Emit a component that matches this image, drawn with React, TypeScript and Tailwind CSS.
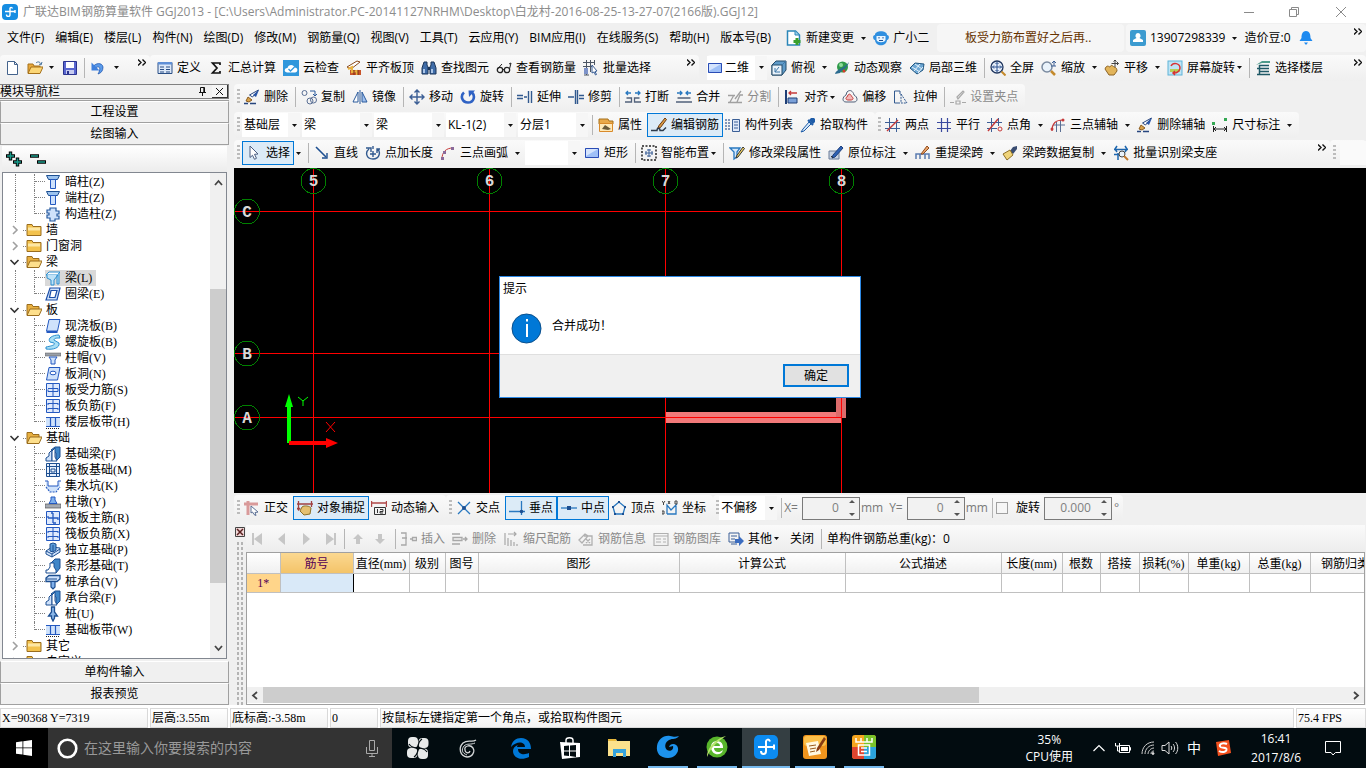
import type { ReactNode } from "react";

const B = "#1d4f91";
const L = "#cfe2fb";

// 16x16 toolbar and tree drawings
const icons: Record<string, ReactNode> = {
  newDoc: <path d="M2.500 1.500h7l3 3v10h-10zM9.500 1.500v3h3" fill="#fff" stroke="#44638c" />,
  open: (
    <>
      <path d="M1 13V4h5l1 2h6v2" fill="#e8a83a" stroke="#a5701a" />
      <path d="M1 13.500 4 7h12l-3 6.500z" fill="#fbd676" stroke="#a5701a" />
      <path d="M9 3c2-2 4-1 5 1m1-2-1 3-2-1" stroke="#44719c" />
    </>
  ),
  save: (
    <>
      <path d="M1.500 1.500h13v13h-13z" fill="#5a67d0" stroke="#2c348f" />
      <path d="M4 2h8v6H4z" fill="#fff" />
      <path d="M4 10h8v4H4z" fill="#c7ccf0" />
      <path d="M5 11h2v3H5z" fill="#2c348f" />
    </>
  ),
  undo: (
    <>
      <path d="M3 7c2-4 9-5 10 0 0 4-2 6-5 7 2-3 3-8-1-7l-2 1.500z" fill="#5b9bea" stroke="#2459b0" strokeWidth=".8" />
      <path d="M1.500 2.500v8h8z" fill="#3f80dd" />
    </>
  ),
  define: (
    <>
      <path d="M1 2.500h14v11H1z" fill="#dce8f8" stroke="#2a4f86" />
      <path d="M1 2h14v2.500H1z" fill="#5f8fd6" />
      <path d="M3 7h4M3 9.500h4M3 12h4M9 7h4M9 9.500h4M9 12h4" stroke="#2a4f86" />
    </>
  ),
  sigma: <path d="M12 5V3H4.500L9 8l-4.500 5H12v-2" stroke="#111" strokeWidth="1.700" />,
  cloud: (
    <>
      <rect width="16" height="16" fill="#2f97dc" />
      <path d="M4 12.500c-4-1-2-5 .5-4.500C5 4 11 4 11.500 7.500c4 0 3.500 5 .5 5z" fill="#fff" />
      <path d="m5.500 9 2 2 4-4" stroke="#2f97dc" strokeWidth="1.300" />
    </>
  ),
  roof: (
    <>
      <path d="M1 7 11 1l3 1-9 7z" fill="#fff" stroke="#8a4a1c" />
      <path d="M4 10h11v5H4z" fill="#c8542a" />
      <path d="m2 9 4-2v5l5-1v4" stroke="#e9b240" strokeWidth="2" />
      <path d="M8 10v5M12 10v5" stroke="#7a2c12" />
    </>
  ),
  binoc: (
    <>
      <path d="M3 2h3v3l1 2v7H1V8zM13 2h-3v3L9 7v7h6V8z" fill="#3f6ca8" stroke="#1b3558" />
      <path d="M3 9v4M11 9v4" stroke="#cfe2fb" strokeWidth="1.500" />
      <path d="M7 7h2v3H7z" fill="#1b3558" />
    </>
  ),
  glasses: (
    <>
      <circle cx="4" cy="10" r="2.700" stroke="#222" strokeWidth="1.300" />
      <circle cx="11" cy="10" r="2.700" stroke="#222" strokeWidth="1.300" />
      <path d="M6.500 9.500h2M13.500 9l1.500-6-2 1M1.500 9 6 4" stroke="#222" />
    </>
  ),
  batch: (
    <>
      <path d="M0 2.500h12M0 6.500h9M3.500 0v15M7.500 0v12M11.500 0v5M1 15h5" stroke="#4b5563" />
      <path d="M1 8h4v6H1z" fill="#7d93c9" />
      <path d="m9 5 5 6-2 .5 1.500 3-1 .5L11 12l-2 1z" fill="#fff" stroke="#3b5f96" />
    </>
  ),
  rect: (
    <>
      <rect x="1" y="3" width="14" height="10" fill="#9fc0f7" />
      <path d="M1.500 3.500h13v9h-13z" stroke="#2a4cb5" />
      <path d="M2 4h12L2 11z" fill="#d5e4fd" />
    </>
  ),
  cube: (
    <>
      <path d="M1 5 5 1h10v9l-4 5H1z" fill="#5f9bc9" stroke="#234a68" />
      <path d="M1 5h10v10H1z" fill="#e9f2fa" stroke="#234a68" />
      <path d="m11 5 4-4M4 8v4h5M8 7l-4 5" stroke="#3f78a8" />
    </>
  ),
  orbit: (
    <>
      <circle cx="8.500" cy="7" r="5.500" fill="#2f9a4a" />
      <circle cx="7" cy="5" r="2" fill="#8fdc9a" />
      <path d="M1 14c1-5 9-5 14-12-2 7-7 7-9 11z" fill="#2b6b8f" />
      <circle cx="10" cy="11" r="1.500" fill="#d93a2b" />
    </>
  ),
  local3d: (
    <>
      <path d="m1 8 5-5 9 1-1 6-6 4z" fill="#6da7d4" stroke="#1f5580" />
      <path d="m3 7 8 5M6 4l7 5M11 4l-6 7M14 7l-5 6" stroke="#e6f2fb" />
    </>
  ),
  full: (
    <>
      <circle cx="7" cy="7" r="6" fill="#e7effa" stroke="#1e355e" strokeWidth="1.300" />
      <path d="M7 2.500v9M2.500 7h9M5.500 4 7 2.500 8.500 4M5.500 10 7 11.500 8.500 10M4 5.500 2.500 7 4 8.500M10 5.500 11.500 7 10 8.500" stroke="#2b5190" />
      <path d="m11.500 11.500 4 4" stroke="#c48a2c" strokeWidth="2" />
    </>
  ),
  zoomIcon: (
    <>
      <circle cx="6" cy="7" r="5" fill="#eaf3fb" stroke="#7b8ba0" strokeWidth="1.500" />
      <path d="m10 11 4 4" stroke="#c48a2c" strokeWidth="2.500" />
      <path d="M13 1v5m-2-3 2-2 2 2m-5 3h5" stroke="#3c5f95" />
    </>
  ),
  pan: (
    <>
      <path d="M2 7c2-2 3 0 4 0 1-3 3-1 4 0 2 0 3 2 3 4l-3 4H5L1 9z" fill="#e2b45a" stroke="#8d6426" />
      <path d="M11 0v7M7.500 3.500h7M9.500 1.500 11 0l1.500 1.500M13 2l1.500 1.500L13 5" stroke="#444" />
    </>
  ),
  screenRot: (
    <>
      <rect x="1" y="1" width="14" height="14" fill="#bfe4f5" stroke="#5fb3d8" />
      <path d="M3 9h10v3H3z" fill="#b8cf57" />
      <path d="M4 6c2-4 9-3 9 2 0 3-3 5-6 5m1-2-2 2 2 2" stroke="#d83333" strokeWidth="1.500" />
    </>
  ),
  floors: (
    <>
      <path d="m1 5 6-4h8v2H7z" fill="#4e9a8a" />
      <path d="M4 5.500h10M2 8.500h12M4 11.500h10M2 14.500h13M4.500 5v10" stroke="#1f5966" strokeWidth="1.500" />
    </>
  ),
  brush: (
    <>
      <path d="m14.500 1-6 7-3-2z" fill="#fff" stroke="#27457e" />
      <path d="m9 6 3 2 3-7z" fill="#2a56a8" />
      <path d="m4 8 4 3-3 2-3-1z" fill="#d8a24b" stroke="#8b5b1e" />
      <path d="M0 14.500h4M6 14.500h6" stroke="#27457e" strokeWidth="1.500" />
    </>
  ),
  copy: (
    <>
      <circle cx="3.500" cy="4" r="2.500" stroke="#5a6f94" />
      <circle cx="9" cy="12" r="3" stroke="#5a6f94" />
      <circle cx="12.500" cy="11" r="3" stroke="#5a6f94" />
      <path d="M9 2h5v4m-2-1 2 2 2-2" stroke="#29589b" />
    </>
  ),
  mirror: (
    <>
      <path d="M6 3v10H1z" fill="#fff" stroke="#2a5a9c" />
      <path d="M10 3v10h5z" fill="#9fc0ee" stroke="#2a5a9c" />
      <path d="M8 1v14" stroke="#2a5a9c" />
    </>
  ),
  move: <path d="M8 1v14M1 8h14M5.500 3.500 8 1l2.500 2.500M5.500 12.500 8 15l2.500-2.500M3.500 5.500 1 8l2.500 2.500M12.500 5.500 15 8l-2.500 2.500" stroke="#3c5f95" strokeWidth="1.400" />,
  rotate: (
    <>
      <path d="M4 3.500C0 7 2 13.500 8 13.500S15.500 7 12 3.500" stroke="#2f62c4" strokeWidth="2.600" />
      <path d="M8.500 1.500H15L9 8z" fill="#2f62c4" />
    </>
  ),
  extend: <path d="M0 6.500h6M0 9.500h6M7 8h3M11.500 2v12M14.500 2v12" stroke="#31598f" strokeWidth="1.400" />,
  trim: <path d="M0 8h6M7.500 1v14M9.500 1v14M11 6.500h5M11 9.500h5" stroke="#31598f" strokeWidth="1.400" />,
  breakI: (
    <>
      <path d="M1 4h5M10 4h5M3 2 1 4l2 2M13 2l2 2-2 2" stroke="#2878c0" strokeWidth="1.300" />
      <path d="M1.500 9h5v4H0M14.500 9h-5v4H16" stroke="#52617b" strokeWidth="1.300" />
    </>
  ),
  merge: (
    <>
      <path d="M1 4h5M15 4h-5M4 2l2 2-2 2M12 2l-2 2 2 2" stroke="#2878c0" strokeWidth="1.300" />
      <path d="M1.500 9h13M0 13h16" stroke="#52617b" strokeWidth="1.300" />
    </>
  ),
  split: <path d="M1 6.500h7M1 13.500h14M3 13l4-7M8 10l6-8M10 13l3-7h3" stroke="#a0a0a0" strokeWidth="1.300" />,
  align: (
    <>
      <path d="M2 1v14" stroke="#1f3f77" strokeWidth="2" />
      <path d="M4 9h9v5H4z" fill="#7aa0d8" stroke="#1f3f77" />
      <path d="M13 4H5m2-2L5 4l2 2" stroke="#c63a3a" strokeWidth="1.300" />
    </>
  ),
  offset: (
    <>
      <path d="M5 3c3-3 6-1 7 3 4 2 4 7 0 7H4c-4 0-4-5 0-7z" stroke="#52617b" />
      <path d="M6 6c2-2 3 0 4 2 2 1 1 3-1 3H6c-2 0-3-2-1-3z" fill="#f2b8b8" stroke="#c63a3a" />
    </>
  ),
  stretch: (
    <>
      <path d="M7 14H1.500V2H7v3" stroke="#31598f" />
      <path d="m8 5 6 9H8z" stroke="#31598f" strokeDasharray="2 1" />
    </>
  ),
  gripPt: <path d="m7 8 6-6 1 1-6 7zM0 13.500h4M6 12h4v3H6zM12 13.500h4" stroke="#a8a8a8" strokeWidth="1.200" />,
  props: (
    <>
      <path d="M1 2h9l1 2h4v3H1z" fill="#e9a94a" stroke="#a5701a" />
      <path d="M1.500 6.500h13v8h-13z" fill="#ffe9b8" stroke="#d98a2a" />
      <path d="m4 12 3-4 6 4-3 1z" fill="#6a5a3a" />
    </>
  ),
  editBar: (
    <>
      <path d="m14 1 1.500 1.500-6 8-3 1 1.500-3z" fill="#d99a45" stroke="#6b3c14" />
      <path d="M0 13.500h6c0-3 3-3 3 0h3l3-3" stroke="#2d3a4a" strokeWidth="1.400" />
    </>
  ),
  list: (
    <>
      <path d="M0 3h5M0 6h5M0 9h5M0 12h5" stroke="#5b75a5" strokeWidth="1.300" strokeDasharray="2 1" />
      <path d="M7.500 2.500h7v12h-7z" fill="#dfe8f8" stroke="#3b5f96" />
      <path d="M9 5h4M9 8h4M9 11h4" stroke="#3b5f96" />
    </>
  ),
  pick: (
    <>
      <path d="M9 3 13 7l2-2V2l-1-1h-3z" fill="#1e5ca8" />
      <path d="m8 3 5 5" stroke="#1e5ca8" strokeWidth="2" />
      <path d="m9 5-6 7-2 3 3-1 7-7z" fill="#d4e6f8" stroke="#1e5ca8" />
    </>
  ),
  twoPts: (
    <>
      <path d="M0 5.500h15M0 11.500h15M4.500 1v14M11.500 1v14" stroke="#3d5e96" />
      <path d="M2 14 13 3" stroke="#c63a3a" strokeWidth="1.400" />
    </>
  ),
  parallel: <path d="M1 5.500h14M1 11.500h14M5.500 1v14M11.500 1v14" stroke="#3a4a9f" strokeWidth="1.200" />,
  ptAngle: (
    <>
      <path d="M0 5.500h15M0 11.500h10M4.500 1v14M11.500 1v8" stroke="#3d5e96" />
      <path d="M1 14 11 2" stroke="#c63a3a" strokeWidth="1.400" />
      <circle cx="13" cy="12" r="2" stroke="#c63a3a" />
    </>
  ),
  threeAxis: (
    <>
      <path d="M3 8h12M10.500 3v12M6.500 5v10" stroke="#5a6f94" />
      <path d="M2 14C2 6 6 3 13 3" stroke="#c63a3a" strokeWidth="1.200" />
      <circle cx="2" cy="12" r="1.500" fill="#c63a3a" />
      <circle cx="13" cy="3" r="1.500" fill="#c63a3a" />
    </>
  ),
  dim: (
    <>
      <path d="M1.500 9v6M14.500 9v6M2 12h12M4 10l-2 2 2 2M12 10l2 2-2 2" stroke="#222" />
      <path d="M0 5h3v3H0zM12 1h3v3h-3z" fill="#34a853" />
    </>
  ),
  cursor: <path d="m4 1 8 8-3.500.3 2 4-2 1-2-4L4 12.500z" fill="#fff" stroke="#4a5d80" />,
  line: (
    <>
      <path d="m2 2 10 10" stroke={B} strokeWidth="1.600" />
      <path d="M8 13h5V8" stroke={B} strokeWidth="1.400" />
    </>
  ),
  ptLen: <path d="M4 4C0 7 1 14 8 14s8-8 4-10M1 3h5v4M8 1v3M8 6v6M5 9h6M12 8V4h3" stroke="#31598f" strokeWidth="1.400" />,
  arc: (
    <>
      <path d="M2 14C2 7 6 3 13 3" stroke="#c63a3a" />
      <path d="M1 12h3v3H1zM3 6h3v3H3zM11 2h3v3h-3z" fill="#8a6a9a" />
    </>
  ),
  smart: (
    <>
      <rect x="1" y="1" width="14" height="14" stroke="#222" strokeWidth="1.500" strokeDasharray="2 1.500" />
      <path d="M8 4v8M4 8h8M6 5h4M6 11h4M5 6v4M11 6v4" stroke="#3b5f96" />
    </>
  ),
  modBeam: (
    <>
      <path d="M1 3h10L8 7v5l-3 2V7z" fill="#d5e8fb" stroke="#2878c0" strokeWidth="1.300" />
      <path d="m14 2 1.500 1.500L9 12l-2 1 .5-2z" fill="#f0d060" stroke="#333" />
    </>
  ),
  inSitu: (
    <>
      <path d="M1 6h10v8H1z" fill="#c9d3e3" stroke="#6b7c98" />
      <path d="m13 1 2 2-8 9-3 1 1-3z" fill="#2f62b5" stroke="#1d3f7c" />
      <path d="m3 11 2 2" stroke="#333" />
    </>
  ),
  respan: (
    <>
      <path d="M1 14V9h13v5M5 9v5M10 9v5" stroke="#5a7bb0" strokeWidth="1.500" />
      <path d="m12 1 2 2-6 6-2 0z" fill="#e9a36a" stroke="#914d1e" />
    </>
  ),
  spanCopy: (
    <>
      <path d="m15 1-4 1-3 4 3 3 4-5z" fill="#3a4d72" />
      <path d="M8 5 1 9l4 6 6-5z" fill="#f0d47a" stroke="#8d6f26" />
    </>
  ),
  identify: (
    <>
      <path d="M1 4.500h14M4 1l-2 3 2 3M12 1l2 3-2 3M5 8v7M11 8v3M1 9.500h6" stroke="#1d66ae" strokeWidth="1.500" />
      <circle cx="9" cy="9" r="3" fill="#e8f2fb" stroke="#444" />
      <path d="m11 11 4 4" stroke="#c0782c" strokeWidth="2" />
    </>
  ),
  ortho: (
    <>
      <path d="M0 4h14M4 1v14" stroke="#d99a9a" strokeWidth="3" />
      <path d="m7 6 7 6-3 .5 1 3-2-1-1.500-2.500L7 13z" fill="#fff" stroke="#5a6f94" />
    </>
  ),
  snap: (
    <>
      <path d="M1.500 1v9M14.500 1v6M0 4h16M0 8l1.500 2L3 8" stroke="#a04040" strokeWidth="1.300" />
      <path d="M5 7c2-2 8-1 9 1l-1 6-6 1-4-4z" fill="#e4c070" stroke="#8d6f26" />
    </>
  ),
  dynIn: (
    <>
      <path d="M.500 1v6M15.500 1v6M1 3h14" stroke="#b04848" strokeWidth="1.400" />
      <path d="M3.500 7.500h11v7h-11zM6.500 9v4M9 9.500h3v2H9v1.500h3" stroke="#333" />
    </>
  ),
  cross: (
    <>
      <path d="m2 2 12 12M14 2 2 14" stroke="#2878c0" strokeWidth="1.300" />
      <circle cx="8" cy="8" r="2" fill={B} />
    </>
  ),
  perp: (
    <>
      <path d="M0 11.500h16M12.500 1v14" stroke="#2878c0" strokeWidth="1.300" />
      <circle cx="12.500" cy="11.500" r="1.800" fill={B} />
    </>
  ),
  mid: (
    <>
      <path d="M0 8h16" stroke="#2878c0" strokeWidth="1.300" />
      <path d="M6 6h4v4H6z" fill={B} />
    </>
  ),
  vertex: (
    <>
      <path d="M8 2 2 7l2 7h8l2-7z" stroke="#2878c0" strokeWidth="1.300" />
      <path d="M7 1h2v2H7zM1 6h2v2H1zM13 6h2v2h-2zM3 13h2v2H3zM11 13h2v2h-2z" fill={B} />
    </>
  ),
  coord: (
    <>
      <path d="M5 14V5l4 5 6-6M5 14h9V6" stroke="#2878c0" strokeWidth="1.300" />
      <path d="m0 1 1.500 2L3 1M1.500 3v2M6 1l2 3M8 1 6 4M13 1h2v3h-2zM0 11h2v3H0z" stroke="#444" />
    </>
  ),
  insert: <path d="M0 2h5v12H0M1 7h5M9 8h3M11.500 6.500h4v3h-4z" stroke="#a8a8a8" strokeWidth="1.300" />,
  remove: <path d="M0 3h8M0 13h8M1 6.500h9v3H1zM11 8h4M13 6l2 2-2 2" stroke="#a8a8a8" strokeWidth="1.300" />,
  scaleBar: <path d="M2 2v12M5 3h8M11 1l2 2-2 2M5 7v8M8 9v6M11 11v4M14 13v2" stroke="#a8a8a8" strokeWidth="1.200" />,
  barInfo: <path d="M1 9l6-6 3 2-6 7zM6 5h8v9H5M8 8l4 4M12 8l-4 4" stroke="#b0b0b0" strokeWidth="1.300" />,
  barLib: <path d="M1 2.500h14v12H1zM1 5h14M3 8h5M3 11h5M10 8h3M10 11h3" stroke="#b0b0b0" strokeWidth="1.200" />,
  other: (
    <>
      <path d="M1 2h10v9H1zM3 5h6M3 8h4M3 13h6" stroke="#3b5f96" />
      <path d="M7 8h4V5l5 5-5 5v-3H7z" fill="#3b6cc0" />
    </>
  ),
  changeDoc: (
    <>
      <path d="M1.500 1h8l4 4v10h-12z" fill="#fff" stroke="#2b86b8" strokeWidth="1.500" />
      <path d="M9 1v4h4" fill="#9ed3ee" stroke="#2b86b8" />
      <path d="M11 8v7M7.500 11.500h7" stroke="#3aa02c" strokeWidth="3" />
    </>
  ),
  mascot: (
    <>
      <path d="M2 5C2 0 14 0 14 5c3 0 2 5 0 5-.5 7-11.500 7-12 0-2 0-3-5 0-5z" fill="#2f8fe0" />
      <path d="M3.500 6h9v4c-1 3-8 3-9 0z" fill="#e8f5ff" />
      <path d="M6 7v1.500M10 7v1.500M6 10.500h4" stroke="#1d4f91" />
    </>
  ),
  user: (
    <>
      <rect width="16" height="16" rx="2" fill="#3c9bd0" />
      <path d="M8 3a2.800 2.800 0 0 1 1.500 5l3.500 2v2H3v-2l3.500-2A2.800 2.800 0 0 1 8 3z" fill="#fff" />
    </>
  ),
  bell: (
    <>
      <path d="M8 1c4 0 4.500 4 4.500 7l2 3h-13l2-3C3.500 5 4 1 8 1z" fill="#1e8af0" />
      <path d="M6 12.500h4L8 15z" fill="#1e8af0" />
    </>
  ),
  // tree
  folder: (
    <>
      <path d="M1 13.500v-11h5l1 2h8v9z" fill="#f3c24d" stroke="#9a6d1e" />
      <path d="M2 5.500h12v3H2z" fill="#fde7a4" />
    </>
  ),
  folderOpen: (
    <>
      <path d="M1 13V2.500h5l1 2h6V7" fill="#e8b041" stroke="#9a6d1e" />
      <path d="M1 13.500 4 7h12l-3 6.500z" fill="#fddf8c" stroke="#9a6d1e" />
    </>
  ),
  column: (
    <>
      <path d="M1.500 1.500h13l-2 4h-9z" fill="#9cc3ee" stroke={B} />
      <path d="M5.500 5.500h5v9h-5z" fill={L} stroke="#2459c0" />
    </>
  ),
  tieCol: <path d="M5 2h6v3h3v3h-2v2h2v3h-4v2H5v-3H2V9h2V7H2V4h3z" fill={L} stroke="#2459a0" strokeWidth="1.200" />,
  beam: (
    <>
      <path d="M1 5 4 2h11l-3 3z" fill="#fff" stroke="#2b8fd0" />
      <path d="M2 5v3l4 2v5h3v-5l4-5M12 5v9h2V3" fill="#bfe2f7" stroke="#2b8fd0" />
    </>
  ),
  ring: <path d="M5 2h10l-3 12H1zM6 4.500h6L10 11.500H4.500z" fill={L} fillRule="evenodd" stroke="#1d4fa8" strokeWidth="1.200" />,
  slab: (
    <>
      <path d="M4 1.500h11L12.500 13H1.500z" fill={L} stroke="#2459c0" />
      <path d="M1.500 13h11v2h-11z" fill="#2459c0" />
    </>
  ),
  spiral: <path d="M14 1C8 1 2 4 5 8l4 1c2 2-3 3-8 4v2c7 1 14-1 13-6L9 6c0-2 3-2 6-2z" fill="#a8dff5" stroke="#2b8fd0" />,
  cap: (
    <>
      <path d="M0 3h16v3H0z" fill="#9aa0a8" stroke="#555" strokeWidth=".5" />
      <path d="M4 7h8l-2 3v4H6v-4z" fill={L} stroke="#2459c0" />
    </>
  ),
  hole: (
    <>
      <path d="M4 1.500h11L12.500 14H1.500z" fill={L} stroke="#2459c0" />
      <ellipse cx="8" cy="7" rx="3" ry="1.800" fill="#fff" stroke="#2459c0" />
    </>
  ),
  bars: (
    <>
      <path d="M1.500 1.500h13v13h-13z" fill="#dfeafd" stroke="#2459c0" />
      <path d="M8 2v12M3 6.500h10v3H3v-2" stroke="#2459c0" />
    </>
  ),
  negBars: (
    <>
      <path d="M1.500 1.500h13v13h-13z" fill="#dfeafd" stroke="#2459c0" />
      <path d="M8 1v14M3 5.500h10M3 10.500h10M3 5v2M13 5v2M3 10v2M13 10v2" stroke="#2459c0" />
    </>
  ),
  strip: (
    <>
      <path d="M1 3h14v10H1z" fill={L} />
      <path d="M1 3.500h14M1 12.500h14M5.500 4v8M10.500 4v8" stroke="#2459c0" strokeWidth="1.200" />
      <path d="M1 14.500h14" stroke="#222" strokeDasharray="1 1" />
    </>
  ),
  fBeam: (
    <>
      <path d="M6 4 10 1h5v10l-4 4V7z" fill="#3f86c8" stroke={B} />
      <path d="M1 15v-3l3-2V7l3-3v11z" fill={L} stroke={B} />
      <path d="M7 15V5l3-3v9l2 4z" fill="#fff" stroke={B} />
    </>
  ),
  raft: (
    <>
      <path d="M1.500 1.500h13v13h-13z" fill="#e8f1fd" stroke={B} />
      <path d="M4.500 2v12M11.500 2v12M2 4.500h12M2 11.500h12M6 7h4v3H6z" stroke={B} />
    </>
  ),
  pit: (
    <>
      <path d="M1 2v7l4 5h6l4-5V2l-3 6H4z" fill={L} />
      <path d="M0 3h3v5h10V3h3" stroke="#2459c0" />
      <path d="M1 9l4 5h6l4-5" stroke="#2459c0" strokeDasharray="2 1" strokeWidth="1.200" />
    </>
  ),
  pier: (
    <>
      <path d="M0 10h16v4H0z" fill="#a5aab2" stroke="#555" strokeWidth=".7" />
      <path d="M6 3h4v3l2 3.500H4L6 6z" fill="#7fb0ec" stroke="#2459c0" />
    </>
  ),
  mainBars: (
    <>
      <path d="M1.500 1.500h13v13h-13z" fill="#dfeafd" stroke="#2459c0" />
      <path d="M8 3v10M3 8h10v2M6 3h2M8 13h3M3 8V6" stroke="#2459c0" strokeWidth="1.300" />
    </>
  ),
  isolated: (
    <>
      <path d="m1 9 6-4 8 1v4l-8 5-6-3z" fill={L} stroke={B} />
      <path d="M5 9V2l3-1 3 1v6L8 10zM8 3v7" fill="#5a9bd8" stroke={B} />
      <path d="m1 9 6 3 8-5M7 12v3" stroke={B} />
    </>
  ),
  stripF: (
    <>
      <path d="m6 5 4-4h5v9l-4 5z" fill="#3f86c8" stroke={B} />
      <path d="M1 15v-3h2l2-3V5h4v4l2 3v3z" fill="#fff" stroke={B} />
    </>
  ),
  pileCap: (
    <>
      <path d="M1 4 4 1.500h11V5l-3 2.500H1z" fill={L} stroke={B} strokeWidth="1.300" />
      <path d="M6 8v5l2 2 2-2V8M1 5h11" fill="#7fb0ec" stroke={B} strokeWidth="1.200" />
    </>
  ),
  pile: <path d="M6.500 1h3v5l3 4h-3v2L8 15l-1.500-3v-2h-3l3-4z" fill="#8ab6e8" stroke={B} strokeWidth="1.300" />,
};

function Icon({ name }: { name: string }) {
  return (
    <svg className="size-4 shrink-0" viewBox="0 0 16 16" fill="none" aria-hidden="true">
      {icons[name]}
    </svg>
  );
}

function Caret() {
  return (
    <svg className="h-[3px] w-[5px] shrink-0" viewBox="0 0 5 3" aria-hidden="true">
      <path d="M0 0h5L2.500 3z" fill="#111" />
    </svg>
  );
}

interface ToolProps {
  icon?: string;
  label: string;
  caret?: boolean;
  tight?: boolean;
  active?: boolean;
  disabled?: boolean;
}

function Tool({ icon, label, caret, tight, active, disabled }: ToolProps) {
  const state = active
    ? "-ml-0.5 mr-0.5 border border-[#0078d7] bg-[#dcebf7] px-[3px]"
    : "pr-[7px]";
  return (
    <button
      type="button"
      disabled={disabled}
      className={`flex h-6 shrink-0 items-center whitespace-nowrap ${state} ${disabled ? "text-[#8a8a8a]" : "text-black"}`}
    >
      {icon && <span className="mr-1 flex"><Icon name={icon} /></span>}
      {label}
      {caret && <span className={tight ? "ml-0.5 flex" : "ml-[7px] flex"}><Caret /></span>}
    </button>
  );
}

function IconButton({ icon, label }: { icon: string; label: string }) {
  return (
    <button type="button" aria-label={label} className="shrink-0">
      <Icon name={icon} />
    </button>
  );
}

function Sep() {
  return <div className="mr-[5px] h-5 w-px shrink-0 bg-[#b5b5b5]" />;
}

function Grip() {
  return <div className="mr-1 h-4 w-[3px] shrink-0 bg-[repeating-linear-gradient(#bcbcbc_0_2px,transparent_2px_4px)]" />;
}

function More() {
  return (
    <button type="button" aria-label="更多" className="ml-auto shrink-0 self-start pr-1 pt-1">
      <svg className="h-[7px] w-2" viewBox="0 0 8 7" fill="none" aria-hidden="true">
        <path d="m0 .5 3 3-3 3M4.500.5l3 3-3 3" stroke="#111" strokeWidth="1.400" />
      </svg>
    </button>
  );
}

function Group({ children, className = "" }: { children: ReactNode; className?: string }) {
  return (
    <div className={`flex h-[26px] items-center rounded bg-linear-to-b from-[#fafafa] to-[#efefef] pl-[3px] ${className}`}>
      {children}
    </div>
  );
}

function Combo({ value, label, className }: { value: string; label: string; className: string }) {
  return (
    <div className={`relative h-6 shrink-0 bg-white ${className}`}>
      <select aria-label={label} className="h-full w-full appearance-none bg-transparent pl-0.5 outline-none">
        <option>{value}</option>
      </select>
      <span className="pointer-events-none absolute inset-y-0 right-0 flex w-3 items-center justify-center bg-[#f6f6f6]">
        <Caret />
      </span>
    </div>
  );
}

function Spin({ id, value, className }: { id: string; value: string; className: string }) {
  return (
    <div className={`flex h-[23px] shrink-0 items-center border border-[#7a7a7a] bg-[#f2f2f2] pr-1 ${className}`}>
      <input id={id} disabled defaultValue={value} className="w-full min-w-0 pr-2.5 text-right text-[#808080]" />
      <svg className="h-4 w-[6px] shrink-0" viewBox="0 0 6 16" aria-hidden="true">
        <path d="M0 3h6L3 0zM0 13h6l-3 3z" fill="#555" />
      </svg>
    </div>
  );
}

const menus = [
  "文件(F)", "编辑(E)", "楼层(L)", "构件(N)", "绘图(D)", "修改(M)", "钢筋量(Q)",
  "视图(V)", "工具(T)", "云应用(Y)", "BIM应用(I)", "在线服务(S)", "帮助(H)", "版本号(B)",
];

function TitleBar() {
  return (
    <header className="flex h-[23px] shrink-0 items-center bg-white pl-0.5 text-[#8c8c8c]">
      <svg className="mr-[5px] size-4" viewBox="0 0 16 16" fill="none" aria-hidden="true">
        <rect width="16" height="16" rx="4" fill="#168de2" />
        <path d="M8 4v6.500c0 2.500-3.500 2.500-3.500 0M3 7.500h10M10.500 4.500C10 3 8 3 8 4.500M13 6v3" stroke="#fff" strokeWidth="1.400" />
      </svg>
      <h1 className="flex-1 truncate">
        广联达BIM钢筋算量软件 GGJ2013 - [C:\Users\Administrator.PC-20141127NRHM\Desktop\白龙村-2016-08-25-13-27-07(2166版).GGJ12]
      </h1>
      <svg className="mr-[19px] h-3 w-[103px]" viewBox="0 0 103 12" fill="none" stroke="#8a8a8a" aria-hidden="true">
        <path d="M0 6.500h10M45.500 3.500h7v7h-7zM47.500 3.500v-2h7v7h-2M92 1l10 10M102 1 92 11" />
      </svg>
    </header>
  );
}

function MenuBar() {
  return (
    <nav className="flex h-[30px] shrink-0 items-center">
      <div className="flex w-[937px] shrink-0 items-center pl-[7px]">
        {menus.map((m) => (
          <button key={m} type="button" className="shrink-0 whitespace-nowrap pr-[11px]">{m}</button>
        ))}
        <div className="ml-1 flex">
          <Tool icon="changeDoc" label="新建变更" caret />
          <Tool icon="mascot" label="广小二" />
        </div>
      </div>
      <div className="mr-0.5 flex h-7 w-[187px] shrink-0 items-center rounded bg-[#f6f6f6] pl-7 text-[#663300]">
        板受力筋布置好之后再..
      </div>
      <div className="flex h-7 flex-1 items-center rounded bg-[#f6f6f6] pl-1">
        <Tool icon="user" label="13907298339" caret />
        <Tool label="造价豆:0" />
        <IconButton icon="bell" label="通知" />
        <More />
      </div>
    </nav>
  );
}

function MainToolbar() {
  return (
    <div className="flex h-[29px] shrink-0 items-center">
      <Group className="w-[150px] shrink-0">
        <div className="flex flex-1 items-center pl-0.5">
          <IconButton icon="newDoc" label="新建" />
          <span className="mx-1.5 flex items-center gap-1.5">
            <IconButton icon="open" label="打开" />
            <Caret />
          </span>
          <span className="ml-0.5 mr-1.5 flex"><IconButton icon="save" label="保存" /></span>
          <Sep />
          <span className="flex items-center gap-2">
            <IconButton icon="undo" label="撤销" />
            <Caret />
          </span>
        </div>
        <More />
      </Group>
      <Group className="mr-2 w-[549px] shrink-0 pl-[7px]">
        <Tool icon="define" label="定义" />
        <Tool icon="sigma" label="汇总计算" />
        <Tool icon="cloud" label="云检查" />
        <Tool icon="roof" label="平齐板顶" />
        <Tool icon="binoc" label="查找图元" />
        <Tool icon="glasses" label="查看钢筋量" />
        <Tool icon="batch" label="批量选择" />
        <More />
      </Group>
      <Group className="min-w-0 flex-1">
        <div className="-ml-[3px] mr-1 flex items-center bg-white">
          <Icon name="rect" />
          <Combo value="二维" label="视图模式" className="w-11" />
        </div>
        <Tool icon="cube" label="俯视" caret />
        <Tool icon="orbit" label="动态观察" />
        <Tool icon="local3d" label="局部三维" />
        <Sep />
        <Tool icon="full" label="全屏" />
        <Tool icon="zoomIcon" label="缩放" caret />
        <Tool icon="pan" label="平移" caret />
        <Tool icon="screenRot" label="屏幕旋转" caret tight />
        <Sep />
        <Tool icon="floors" label="选择楼层" />
        <More />
      </Group>
    </div>
  );
}

function DrawToolbars() {
  return (
    <div className="flex shrink-0 flex-col gap-0.5 pb-0.5">
      <div className="flex">
        <Group>
          <Grip />
          <Tool icon="brush" label="删除" />
          <Sep />
          <Tool icon="copy" label="复制" />
          <Tool icon="mirror" label="镜像" />
          <Sep />
          <Tool icon="move" label="移动" />
          <Tool icon="rotate" label="旋转" />
          <Sep />
          <Tool icon="extend" label="延伸" />
          <Tool icon="trim" label="修剪" />
          <Sep />
          <Tool icon="breakI" label="打断" />
          <Tool icon="merge" label="合并" />
          <Tool icon="split" label="分割" disabled />
          <Sep />
          <Tool icon="align" label="对齐" caret tight />
          <Tool icon="offset" label="偏移" />
          <Tool icon="stretch" label="拉伸" />
          <Sep />
          <Tool icon="gripPt" label="设置夹点" disabled />
        </Group>
      </div>
      <div className="flex">
        <Group>
          <Grip />
          <div className="-ml-0.5 mr-1 flex gap-0.5">
            <Combo value="基础层" label="楼层" className="w-[58px]" />
            <Combo value="梁" label="构件类型" className="w-[70px]" />
            <Combo value="梁" label="构件种类" className="w-[70px]" />
            <Combo value="KL-1(2)" label="构件" className="w-[70px]" />
            <Combo value="分层1" label="分层" className="w-[70px]" />
          </div>
          <Sep />
          <Tool icon="props" label="属性" />
          <Tool icon="editBar" label="编辑钢筋" active />
          <Tool icon="list" label="构件列表" />
          <Tool icon="pick" label="拾取构件" />
        </Group>
        <Group>
          <Grip />
          <Tool icon="twoPts" label="两点" />
          <Tool icon="parallel" label="平行" />
          <Tool icon="ptAngle" label="点角" caret />
          <Tool icon="threeAxis" label="三点辅轴" caret />
          <Tool icon="brush" label="删除辅轴" />
          <Tool icon="dim" label="尺寸标注" caret />
        </Group>
      </div>
      <div className="flex">
        <Group className="w-[1096px]">
          <Grip />
          <Tool icon="cursor" label="选择" active />
          <button type="button" aria-label="选择方式" className="pr-[7px]"><Caret /></button>
          <Sep />
          <Tool icon="line" label="直线" />
          <Tool icon="ptLen" label="点加长度" />
          <Tool icon="arc" label="三点画弧" caret />
          <div className="-ml-0.5 mr-1"><Combo value="" label="参数" className="w-[55px]" /></div>
          <Tool icon="rect" label="矩形" />
          <Sep />
          <Tool icon="smart" label="智能布置" caret tight />
          <Sep />
          <Tool icon="modBeam" label="修改梁段属性" />
          <Tool icon="inSitu" label="原位标注" caret />
          <Tool icon="respan" label="重提梁跨" caret />
          <Tool icon="spanCopy" label="梁跨数据复制" caret />
          <Tool icon="identify" label="批量识别梁支座" />
          <More />
        </Group>
        <Group className="flex-1">
          <Grip />
          <div className="h-6 flex-1 bg-[#fafafa]" />
        </Group>
      </div>
    </div>
  );
}

interface TreeItem {
  label: string;
  icon: string;
  last?: boolean;
  selected?: boolean;
  // group rows only
  group?: boolean;
  open?: boolean;
}

const tree: TreeItem[] = [
  { label: "暗柱(Z)", icon: "column" },
  { label: "端柱(Z)", icon: "column" },
  { label: "构造柱(Z)", icon: "tieCol", last: true },
  { label: "墙", icon: "folder", group: true },
  { label: "门窗洞", icon: "folder", group: true },
  { label: "梁", icon: "folderOpen", group: true, open: true },
  { label: "梁(L)", icon: "beam", selected: true },
  { label: "圈梁(E)", icon: "ring", last: true },
  { label: "板", icon: "folderOpen", group: true, open: true },
  { label: "现浇板(B)", icon: "slab" },
  { label: "螺旋板(B)", icon: "spiral" },
  { label: "柱帽(V)", icon: "cap" },
  { label: "板洞(N)", icon: "hole" },
  { label: "板受力筋(S)", icon: "bars" },
  { label: "板负筋(F)", icon: "negBars" },
  { label: "楼层板带(H)", icon: "strip", last: true },
  { label: "基础", icon: "folderOpen", group: true, open: true },
  { label: "基础梁(F)", icon: "fBeam" },
  { label: "筏板基础(M)", icon: "raft" },
  { label: "集水坑(K)", icon: "pit" },
  { label: "柱墩(Y)", icon: "pier" },
  { label: "筏板主筋(R)", icon: "mainBars" },
  { label: "筏板负筋(X)", icon: "negBars" },
  { label: "独立基础(P)", icon: "isolated" },
  { label: "条形基础(T)", icon: "stripF" },
  { label: "桩承台(V)", icon: "pileCap" },
  { label: "承台梁(F)", icon: "fBeam" },
  { label: "桩(U)", icon: "pile" },
  { label: "基础板带(W)", icon: "strip", last: true },
  { label: "其它", icon: "folder", group: true },
  { label: "自定义", icon: "folder", group: true },
];

function TreeRow({ item }: { item: TreeItem }) {
  if (item.group) {
    return (
      <li className="flex h-4 items-center pl-1.5">
        <svg className="mr-0.5 size-3 shrink-0" viewBox="0 0 12 12" fill="none" aria-hidden="true">
          <path
            d={item.open ? "m1.500 4 4 4 4-4" : "m4 2 4 4-4 4"}
            stroke={item.open ? "#333" : "#a0a0a0"}
            strokeWidth="1.600"
          />
        </svg>
        <span className="w-[3px] border-t border-dotted border-[#808080]" />
        <Icon name={item.icon} />
        <span className="ml-1">{item.label}</span>
      </li>
    );
  }
  return (
    <li className="flex h-4 pl-3">
      <span className="w-[19px] border-l border-dotted border-[#808080]" />
      <span className={`w-0 border-l border-dotted border-[#808080] ${item.last ? "h-2" : "h-4"}`} />
      <span className="h-2 w-[10px] border-b border-dotted border-[#808080]" />
      <span className={`flex items-center pr-1 ${item.selected ? "bg-[#d9d9d9]" : ""}`}>
        <Icon name={item.icon} />
        <span className="ml-1">{item.label}</span>
      </span>
    </li>
  );
}

function NavButton({ label }: { label: string }) {
  return (
    <button type="button" className="h-[22px] w-full shrink-0 border border-[#a0a0a0] border-t-white bg-[#f0f0f0]">
      {label}
    </button>
  );
}

function NavPanel() {
  return (
    <aside className="flex w-[229px] shrink-0 flex-col pt-0.5 font-['Liberation_Serif','Noto_Sans_CJK_SC',sans-serif]">
      <div className="flex h-[15px] shrink-0 items-center border-y border-r border-[#808080]">
        <h2 className="flex-1">模块导航栏</h2>
        <svg className="mr-1.5 h-[9px] w-[7px]" viewBox="0 0 7 9" fill="none" aria-hidden="true">
          <path d="M1.500.5h4v5h-4zM0 5.500h7M3.500 5.500V9M4.800.5v5" stroke="#111" />
        </svg>
        <button type="button" aria-label="关闭面板" className="flex h-[13px] w-4 items-center justify-center border-b border-r border-[#333] bg-[#f5f5f5]">
          <svg className="size-[9px]" viewBox="0 0 9 9" aria-hidden="true">
            <path d="m1 1 7 7M8 1 1 8" stroke="#111" />
          </svg>
        </button>
      </div>
      <div className="mt-px flex flex-col border-t border-[#a0a0a0]">
        <NavButton label="工程设置" />
        <NavButton label="绘图输入" />
      </div>
      <div className="mx-0.5 mt-px flex h-[26px] shrink-0 items-center gap-2 bg-linear-to-b from-white to-[#ececec] pl-1">
        <button type="button" aria-label="全部展开">
          <svg className="size-4" viewBox="0 0 16 16" aria-hidden="true">
            <path d="M0 5h9M4.500.5v9M7 11h9M11.500 6.500v9" stroke="#000" strokeWidth="3.400" />
            <path d="M1 5h7M4.500 1.500v7M8 11h7M11.500 7.500v7" stroke="#1b9c8c" strokeWidth="1.600" />
          </svg>
        </button>
        <button type="button" aria-label="全部折叠">
          <svg className="size-4" viewBox="0 0 16 16" aria-hidden="true">
            <path d="M0 5h9M7 11h9" stroke="#000" strokeWidth="3.400" />
            <path d="M1 5h7M8 11h7" stroke="#1b9c8c" strokeWidth="1.600" />
          </svg>
        </button>
      </div>
      <div className="mx-0.5 mb-0.5 flex min-h-0 flex-1 border border-[#828790] bg-white">
        <ul className="min-w-0 flex-1 overflow-hidden pt-px">
          {tree.map((item) => <TreeRow key={item.label} item={item} />)}
        </ul>
        <div className="flex w-4 shrink-0 flex-col items-center bg-[#f0f0f0]">
          <svg className="mt-1.5 h-2 w-[9px]" viewBox="0 0 9 8" fill="none" aria-hidden="true">
            <path d="m1 6 3.500-4L8 6" stroke="#444" strokeWidth="1.800" />
          </svg>
          <div className="flex-100" />
          <div className="w-full flex-290 bg-[#cdcdcd]" />
          <div className="flex-60" />
          <svg className="mb-1.5 h-2 w-[9px]" viewBox="0 0 9 8" fill="none" aria-hidden="true">
            <path d="m1 2 3.500 4L8 2" stroke="#444" strokeWidth="1.800" />
          </svg>
        </div>
      </div>
      <NavButton label="单构件输入" />
      <NavButton label="报表预览" />
    </aside>
  );
}

const axesX = [
  { name: "5", at: 79 },
  { name: "6", at: 255 },
  { name: "7", at: 431 },
  { name: "8", at: 607 },
];
const axesY = [
  { name: "C", at: 43 },
  { name: "B", at: 185 },
  { name: "A", at: 249 },
];

function AxisMark({ x, y, name }: { x: number; y: number; name: string }) {
  return (
    <>
      <circle cx={x} cy={y} r="12.500" fill="none" stroke="#008000" shapeRendering="crispEdges" />
      <text x={x} y={y + 5} textAnchor="middle" fill="#d8d8d8" className="font-['Liberation_Mono',monospace] text-base font-bold">
        {name}
      </text>
    </>
  );
}

function Canvas() {
  return (
    <div className="relative min-h-0 flex-1 overflow-hidden bg-black">
      <svg className="absolute inset-0 h-full w-full" aria-label="轴网">
        <rect x="432" y="244" width="176" height="11" fill="#f27a7a" />
        <rect x="602" y="190" width="10" height="60" fill="#dd6c6c" />
        {axesX.map((a) => (
          <line key={a.name} x1={a.at + 0.5} x2={a.at + 0.5} y1="0" y2="100%" stroke="#f00" />
        ))}
        {axesY.map((a) => (
          <line key={a.name} x1="0" x2="608" y1={a.at + 0.5} y2={a.at + 0.5} stroke="#f00" />
        ))}
        {axesX.map((a) => <AxisMark key={a.name} x={a.at + 0.5} y={13} name={a.name} />)}
        {axesY.map((a) => <AxisMark key={a.name} x={13} y={a.at + 0.5} name={a.name} />)}
        <path d="M53 275v-36h-2l4-13 4 13h-2v36z" fill="#0f0" />
        <path d="M55 273h37v-3l12 5-12 5v-3H55z" fill="#f00" />
        <path d="m64 229 5 4v5M74 229l-5 4" stroke="#0f0" fill="none" />
        <path d="m92 254 9 10M101 254l-9 10" stroke="#f00" />
      </svg>
      <div
        role="dialog"
        aria-label="提示"
        className="absolute left-[265px] top-[108px] flex w-[362px] flex-col border border-[#2d89e5] bg-white"
      >
        <p className="pl-[3px] pt-1 leading-4">提示</p>
        <div className="flex h-[57px] items-start gap-2.5 pl-[11px] pt-4">
          <svg className="size-[31px]" viewBox="0 0 31 31" aria-hidden="true">
            <circle cx="15.500" cy="15.500" r="14.500" fill="#0078d7" stroke="#0a4f8c" />
            <path d="M15 6h2v2.500h-2zM15 11h2v13h-2z" fill="#fff" />
          </svg>
          <p className="pt-[5px]">合并成功！</p>
        </div>
        <div className="flex h-[43px] items-center justify-end border-t border-[#dfdfdf] bg-[#f0f0f0] pb-px pr-[11px]">
          <button type="button" className="h-[23px] w-[66px] border-2 border-[#0078d7] bg-[#e1e1e1]">确定</button>
        </div>
      </div>
    </div>
  );
}

function SnapBar() {
  return (
    <div className="flex h-8 shrink-0 items-start pt-0.5">
      <Group>
        <Grip />
        <Tool icon="ortho" label="正交" />
        <Tool icon="snap" label="对象捕捉" active />
        <Tool icon="dynIn" label="动态输入" />
      </Group>
      <Group>
        <Grip />
        <Tool icon="cross" label="交点" />
        <Tool icon="perp" label="垂点" active />
        <Tool icon="mid" label="中点" active />
        <Tool icon="vertex" label="顶点" />
        <Tool icon="coord" label="坐标" />
      </Group>
      <Group className="pr-1 text-[#7a7a7a]">
        <Grip />
        <div className="-ml-1 mr-1 text-black"><Combo value="不偏移" label="偏移方式" className="w-[58px]" /></div>
        <div className="mr-0.5 h-5 w-px bg-[#b5b5b5]" />
        <label htmlFor="dx" className="mr-1">X=</label>
        <Spin id="dx" value="0" className="w-[58px]" />
        <span className="ml-px mr-1.5">mm</span>
        <label htmlFor="dy" className="mr-1">Y=</label>
        <Spin id="dy" value="0" className="w-[58px]" />
        <span className="ml-px mr-1">mm</span>
        <div className="mr-[3px] h-5 w-px bg-[#b5b5b5]" />
        <input id="rot" type="checkbox" className="size-3 appearance-none border border-[#a0a0a0] bg-[#f6f6f6]" />
        <label htmlFor="rot" className="ml-2 mr-1 text-black">旋转</label>
        <Spin id="angle" value="0.000" className="w-[68px]" />
        <label htmlFor="angle" className="ml-0.5">°</label>
      </Group>
    </div>
  );
}

const navIcons = [
  { label: "首条", d: "M2 2h2v12H2zM12 2v12L4 8z" },
  { label: "上一条", d: "M11 2v12L4 8z" },
  { label: "下一条", d: "M5 2v12l7-6z" },
  { label: "末条", d: "M12 2h2v12h-2zM4 2v12l8-6z" },
];
const moveIcons = [
  { label: "上移", d: "m8 3 5 5h-3v5H6V8H3z" },
  { label: "下移", d: "m8 13 5-5h-3V3H6v5H3z" },
];

function NavIcon({ label, d }: { label: string; d: string }) {
  return (
    <button type="button" disabled aria-label={label}>
      <svg className="size-4" viewBox="0 0 16 16" aria-hidden="true">
        <path d={d} fill="#c6c6c6" />
      </svg>
    </button>
  );
}

const columns = [
  { label: "", w: 33 },
  { label: "筋号", w: 73 },
  { label: "直径(mm)", w: 56 },
  { label: "级别", w: 36 },
  { label: "图号", w: 33 },
  { label: "图形", w: 201 },
  { label: "计算公式", w: 166 },
  { label: "公式描述", w: 156 },
  { label: "长度(mm)", w: 61 },
  { label: "根数", w: 38 },
  { label: "搭接", w: 39 },
  { label: "损耗(%)", w: 49 },
  { label: "单重(kg)", w: 61 },
  { label: "总重(kg)", w: 61 },
  { label: "钢筋归类", w: 70 },
];

function RebarTable() {
  return (
    <table className="w-[1133px] table-fixed border-collapse">
      <colgroup>
        {columns.map((c, i) => <col key={i} style={{ width: c.w }} />)}
      </colgroup>
      <thead>
        <tr className="h-5">
          {columns.map((c, i) => (
            <th
              key={i}
              scope="col"
              className={`whitespace-nowrap border-b border-r border-[#c0c0c0] p-0 pt-0.5 font-normal ${
                i === 1 ? "bg-linear-to-b from-[#fbd890] to-[#f3c368] text-[#550055]" : "bg-linear-to-b from-white to-[#f0f0f0]"
              }`}
            >
              {c.label}
            </th>
          ))}
        </tr>
      </thead>
      <tbody>
        <tr className="h-[19px]">
          {columns.map((c, i) => (
            <td
              key={i}
              className={`border-b border-r border-[#c0c0c0] p-0 text-center ${
                i === 0 ? "bg-[#ffd58a] text-[#550055]" : i === 1 ? "border-r-black bg-[#d9e9f8]" : ""
              }`}
            >
              {i === 0 ? "1*" : ""}
            </td>
          ))}
        </tr>
      </tbody>
    </table>
  );
}

function RebarPanel() {
  return (
    <section className="flex h-[180px] shrink-0 pr-px">
      <div className="flex w-3 shrink-0 flex-col items-center pt-0.5">
        <svg className="size-[10px] shrink-0" viewBox="0 0 10 10" fill="none" aria-hidden="true">
          <path d="M.5.500h9v9h-9z" fill="#f0d8d8" stroke="#444" />
          <path d="m2 2 6 6M8 2 2 8" stroke="#5a2020" strokeWidth="1.500" />
        </svg>
        <div className="mt-1 w-2 flex-1 bg-[radial-gradient(#b4b4b4_1px,transparent_1px)] bg-[size:4px_5px]" />
      </div>
      <div className="flex min-w-0 flex-1 flex-col">
        <div className="flex h-[27px] shrink-0 items-center bg-linear-to-b from-[#fafafa] to-[#ededed] pl-1">
          <div className="mr-1.5 flex gap-2">
            {navIcons.map((n) => <NavIcon key={n.label} {...n} />)}
          </div>
          <Sep />
          <div className="mr-[7px] flex gap-1.5">
            {moveIcons.map((n) => <NavIcon key={n.label} {...n} />)}
          </div>
          <Sep />
          <Tool icon="insert" label="插入" disabled />
          <Tool icon="remove" label="删除" disabled />
          <Tool icon="scaleBar" label="缩尺配筋" disabled />
          <Tool icon="barInfo" label="钢筋信息" disabled />
          <Tool icon="barLib" label="钢筋图库" disabled />
          <Tool icon="other" label="其他" caret tight />
          <div className="ml-1"><Tool label="关闭" /></div>
          <Sep />
          <span>单构件钢筋总重(kg)：0</span>
        </div>
        <div className="flex min-h-0 flex-1 flex-col border border-[#a0a0a0] bg-white font-['Liberation_Serif','Noto_Sans_CJK_SC',sans-serif]">
          <div className="min-h-0 flex-1 overflow-hidden">
            <RebarTable />
          </div>
          <div className="mb-px flex h-4 shrink-0 items-center bg-[#f0f0f0]">
            <svg className="mx-1 h-[9px] w-2" viewBox="0 0 8 9" fill="none" aria-hidden="true">
              <path d="M6 1 2 4.500 6 8" stroke="#444" strokeWidth="1.800" />
            </svg>
            <div className="h-full flex-66 bg-[#cdcdcd]" />
            <div className="flex-34" />
            <svg className="mx-1 h-[9px] w-2" viewBox="0 0 8 9" fill="none" aria-hidden="true">
              <path d="m2 1 4 3.500L2 8" stroke="#444" strokeWidth="1.800" />
            </svg>
          </div>
        </div>
      </div>
    </section>
  );
}

const statusCell = "flex items-center whitespace-nowrap border border-[#d9d9d9] bg-linear-to-b from-white to-[#f2f2f2] pl-px";

function StatusBar() {
  return (
    <footer className="flex h-[23px] shrink-0 gap-0.5 bg-white pt-[3px] font-['Liberation_Serif','Noto_Sans_CJK_SC',sans-serif]">
      <div className={`${statusCell} w-[148px]`}>X=90368 Y=7319</div>
      <div className={`${statusCell} w-[78px]`}>层高:3.55m</div>
      <div className={`${statusCell} w-[98px]`}>底标高:-3.58m</div>
      <div className={`${statusCell} w-12`}>0</div>
      <div className={`${statusCell} flex-1`}>按鼠标左键指定第一个角点，或拾取构件图元</div>
      <div className={`${statusCell} w-[70px]`}>75.4 FPS</div>
    </footer>
  );
}

interface AppEntry {
  label: string;
  running?: boolean;
  active?: boolean;
  art: ReactNode;
}

// 24x24 taskbar drawings
const tools: AppEntry[] = [
  {
    label: "风扇",
    art: (
      <>
        <g fill="#e8eaea">
          <rect x="2" y="1" width="10" height="10.500" rx="4" />
          <rect x="12.500" y="2" width="10" height="10" rx="4" />
          <rect x="1" y="12" width="10.500" height="10" rx="4" />
          <rect x="12" y="12.500" width="10" height="10.500" rx="4" />
        </g>
        <path d="M12 12C8 12 5 11 3 8M12 12c0-4 1-7 4-9M12 12c4 0 7 1 9 4M12 12c0 4-1 7-4 9" stroke="#020c10" strokeWidth="1.200" />
      </>
    ),
  },
  {
    label: "浏览器",
    art: (
      <>
        <path d="M21 4c-4 3-8-1-13 3-5 5-3 13 4 14 6 0 8-6 6-9-3-4-9-2-8 2 0 3 4 4 5 1" stroke="#d5d8d9" strokeWidth="1.300" />
        <path d="M20 7c-4 2-8 0-11 3-3 4-2 7 3 9" stroke="#d5d8d9" />
      </>
    ),
  },
];

const apps: AppEntry[] = [
  {
    label: "Edge",
    art: <path d="M2 11C3 5 7 2 12 2c7 0 10 5 10 11H9c0 6 7 6 11 4v4C12 25 4 22 4 15c0-3 2-5 5-6-1 1-1 2-1 2h8c0-6-9-6-14 0z" fill="#0078d7" />,
  },
  {
    label: "应用商店",
    art: (
      <>
        <path d="M8 7V4c0-3 7-3 7 0v3" stroke="#fff" strokeWidth="1.400" />
        <path d="m2 6 20 1v14l-18 2z" fill="#fff" />
        <path d="m6 10 5-.5v5H6zM12 9.500l6-.5v5.500h-6zM6 15.500h5v4.500l-5-.5zM12 15.500h6V21l-6-1z" fill="#020c10" />
      </>
    ),
  },
  {
    label: "文件资源管理器",
    art: (
      <>
        <path d="M1 3h8l1 2h13v15H1z" fill="#fbe18c" />
        <path d="M1 3h8v2H1z" fill="#e8b93c" />
        <path d="M6 21v-8h13v8h-3v-4H9v4z" fill="#36a3dc" />
      </>
    ),
  },
  {
    label: "G+",
    running: true,
    art: <path d="M23 1c-3 4-6 2-10 4-4 2-5 7-2 10 3 2 7 0 6-4l-4 1c1-4 8-4 9 1 1 5-4 10-10 10C4 23 0 18 1 11 2 5 7 0 14 1c4 1 6 1 9 0z" fill="#1d93ee" />,
  },
  {
    label: "360浏览器",
    running: true,
    art: (
      <>
        <circle cx="12" cy="12" r="10.500" fill="#58b52c" />
        <path d="M6 12c0-8 12-8 12 0v1H9c0 5 6 5 9 2-2 7-12 5-12-3zM9 11h6c0-4-6-4-6 0z" fill="#fff" />
        <path d="M2 22C2 12 12 3 21 1 13 6 6 12 2 22z" fill="#b5e46a" />
      </>
    ),
  },
  {
    label: "广联达",
    running: true,
    active: true,
    art: (
      <>
        <rect width="24" height="24" rx="5" fill="#0c8bf0" />
        <path d="M12 6v10c0 4-5 4-5 0M4 12h16M16 6.500c-1-3-4-2-4 0M20 9.500v5" stroke="#fff" strokeWidth="2" />
      </>
    ),
  },
  {
    label: "写字板",
    running: true,
    art: (
      <>
        <rect width="24" height="24" rx="3" fill="#f0951d" />
        <rect x="1" y="1" width="22" height="10" rx="3" fill="#fbc04a" />
        <path d="m3 8 12-2 3 13-12 2z" fill="#fff8e0" />
        <path d="m6 11 7-1M7 14l6-1M7 17l5-1" stroke="#9a5a1c" />
        <path d="m21 2-7 11-1 4 3-2 7-11z" fill="#8a3c12" />
      </>
    ),
  },
  {
    label: "算量",
    running: true,
    art: (
      <>
        <rect width="24" height="24" rx="3" fill="#f5a51f" />
        <path d="M12 0h9q3 0 3 3v9H12z" fill="#7ac32a" />
        <path d="M12 12h12v9q0 3-3 3h-9z" fill="#2ba4dd" />
        <path d="M0 12h12v12H3q-3 0-3-3z" fill="#e0452f" />
        <path d="M4 3v4h16V3M9 3v4M15 3v4M6.500 10v10h11V10zM9 13h6M9 16.500h6" stroke="#fff" strokeWidth="1.500" />
      </>
    ),
  },
];

function AppButton({ app }: { app: AppEntry }) {
  return (
    <button
      type="button"
      aria-label={app.label}
      className={`flex h-full w-12 flex-col items-center ${app.active ? "bg-[#343e42]" : ""}`}
    >
      <span className="flex flex-1 items-center">
        <svg className="size-6" viewBox="0 0 24 24" fill="none" aria-hidden="true">{app.art}</svg>
      </span>
      {app.running && <span className={`h-0.5 bg-[#76b9ed] ${app.active ? "w-12" : "w-10"}`} />}
    </button>
  );
}

function TaskBar() {
  return (
    <div className="flex h-10 shrink-0 items-center bg-[#020c10] text-white">
      <button type="button" aria-label="开始" className="flex h-full w-12 shrink-0 items-center justify-center bg-black">
        <svg className="size-4" viewBox="0 0 16 16" fill="#fff" aria-hidden="true">
          <path d="M0 2.200 6.500 1.300v6.200H0zM7.300 1.200 16 0v7.500H7.300zM0 8.300h6.500v6.300L0 13.700zM7.300 8.300H16V16l-8.700-1.200z" />
        </svg>
      </button>
      <div className="mr-0.5 flex h-full w-[344px] shrink-0 items-center bg-[#333] pl-[9px] pr-3.5">
        <svg className="mr-1.5 size-[21px] shrink-0" viewBox="0 0 21 21" fill="none" aria-hidden="true">
          <circle cx="10.500" cy="10.500" r="8.800" stroke="#fff" strokeWidth="2.600" />
        </svg>
        <input
          aria-label="搜索"
          placeholder="在这里输入你要搜索的内容"
          className="min-w-0 flex-1 text-sm placeholder:text-[#999]"
        />
        <svg className="h-[17px] w-3" viewBox="0 0 12 17" fill="none" stroke="#aaa" aria-hidden="true">
          <path d="M3.500.5h5v10h-5zM.5 7v6.500h11V7M6 13.500V16M3 16.500h6" />
        </svg>
      </div>
      <div className="flex h-full flex-1 gap-1.5">
        <div className="flex gap-px">
          {tools.map((a) => <AppButton key={a.label} app={a} />)}
        </div>
        <div className="flex gap-px">
          {apps.map((a) => <AppButton key={a.label} app={a} />)}
        </div>
      </div>
      <p className="mr-5 text-center leading-[17px]">35%<br />CPU使用</p>
      <div className="flex shrink-0 items-center">
        <svg className="mr-2.5 h-2 w-3" viewBox="0 0 12 8" fill="none" aria-hidden="true">
          <path d="m.5 7 5.500-5.500L11.500 7" stroke="#fff" strokeWidth="1.200" />
        </svg>
        <svg className="mr-2.5 h-[13px] w-4" viewBox="0 0 16 13" fill="none" aria-hidden="true">
          <path d="M4.500 3.500h10v7h-10zM14.500 5.500h1v3M.5 1v3h4V1M2.500 4v5h2" stroke="#fff" />
          <path d="M6 5h7v4H6z" fill="#fff" />
        </svg>
        <svg className="mr-1.5 size-[14px]" viewBox="0 0 14 14" fill="none" stroke="#ccc" aria-hidden="true">
          <path d="M1 13C1 6 6 1 13 1M4 13c0-5 4-9 9-9M7 13c0-3 3-6 6-6M10 13c0-2 1-3 3-3" />
          <circle cx="12" cy="12.500" r="1" fill="#fff" />
        </svg>
        <svg className="mr-2 h-[14px] w-[18px]" viewBox="0 0 18 14" fill="none" stroke="#ddd" aria-hidden="true">
          <path d="M1 4.500h3L8 1v12L4 9.500H1zM10 5c1 1 1 3 0 4M12 3c2 2 2 6 0 8M14.500 1c3 3 3 9 0 12" />
        </svg>
        <span className="mr-3.5 text-sm">中</span>
        <svg className="mr-5 size-4" viewBox="0 0 16 16" fill="none" aria-hidden="true">
          <path d="m1 2 13-2 2 13-13 3z" fill="#f4511e" />
          <path d="M12 4C8 2 4 4 5 6.500s7 0 6.500 3.500c-.5 2-4 3-7.500 1" stroke="#fff" strokeWidth="2" />
        </svg>
      </div>
      <p className="mr-6 text-center leading-[19px]">16:41<br />2017/8/6</p>
      <svg className="mr-[25px] size-4 shrink-0" viewBox="0 0 16 16" fill="none" stroke="#fff" aria-hidden="true">
        <path d="M.5 1.500h15v11h-5L8 15l-2-2.500H.5z" />
      </svg>
    </div>
  );
}

export default function App() {
  return (
    <div className="flex h-screen flex-col overflow-hidden bg-[#f0f0f0] font-['Open_Sans','Noto_Sans_CJK_SC',sans-serif] text-xs text-black">
      <TitleBar />
      <MenuBar />
      <MainToolbar />
      <main className="flex min-h-0 flex-1">
        <NavPanel />
        <div className="flex min-w-0 flex-1 flex-col pl-[5px] pt-0.5">
          <DrawToolbars />
          <Canvas />
          <SnapBar />
          <RebarPanel />
        </div>
      </main>
      <StatusBar />
      <TaskBar />
    </div>
  );
}
